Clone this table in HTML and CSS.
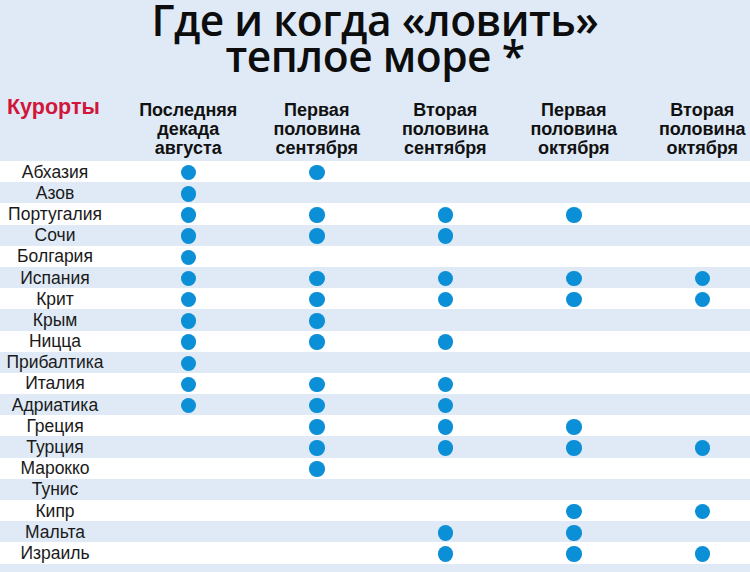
FILE: index.html
```html
<!DOCTYPE html>
<html lang="ru">
<head>
<meta charset="utf-8">
<title>Где и когда «ловить» теплое море</title>
<link rel="stylesheet" href="styles.css">
</head>
<body>
<div class="page">
  <h1 class="title"><span class="tline">Где и когда «ловить»</span><span class="tline">теплое море *</span></h1>
  <div class="table">
    <div class="head">
      <div class="hname">Курорты</div>
      <div class="hcol">Последняя<br>декада<br>августа</div>
      <div class="hcol">Первая<br>половина<br>сентября</div>
      <div class="hcol">Вторая<br>половина<br>сентября</div>
      <div class="hcol">Первая<br>половина<br>октября</div>
      <div class="hcol">Вторая<br>половина<br>октября</div>
    </div>
    <div class="row odd"><span class="name">Абхазия</span><i class="dot"></i><i class="dot"></i><i></i><i></i><i></i></div>
    <div class="row"><span class="name">Азов</span><i class="dot"></i><i></i><i></i><i></i><i></i></div>
    <div class="row odd"><span class="name">Португалия</span><i class="dot"></i><i class="dot"></i><i class="dot"></i><i class="dot"></i><i></i></div>
    <div class="row"><span class="name">Сочи</span><i class="dot"></i><i class="dot"></i><i class="dot"></i><i></i><i></i></div>
    <div class="row odd"><span class="name">Болгария</span><i class="dot"></i><i></i><i></i><i></i><i></i></div>
    <div class="row"><span class="name">Испания</span><i class="dot"></i><i class="dot"></i><i class="dot"></i><i class="dot"></i><i class="dot"></i></div>
    <div class="row odd"><span class="name">Крит</span><i class="dot"></i><i class="dot"></i><i class="dot"></i><i class="dot"></i><i class="dot"></i></div>
    <div class="row"><span class="name">Крым</span><i class="dot"></i><i class="dot"></i><i></i><i></i><i></i></div>
    <div class="row odd"><span class="name">Ницца</span><i class="dot"></i><i class="dot"></i><i class="dot"></i><i></i><i></i></div>
    <div class="row"><span class="name">Прибалтика</span><i class="dot"></i><i></i><i></i><i></i><i></i></div>
    <div class="row odd"><span class="name">Италия</span><i class="dot"></i><i class="dot"></i><i class="dot"></i><i></i><i></i></div>
    <div class="row"><span class="name">Адриатика</span><i class="dot"></i><i class="dot"></i><i class="dot"></i><i></i><i></i></div>
    <div class="row odd"><span class="name">Греция</span><i></i><i class="dot"></i><i class="dot"></i><i class="dot"></i><i></i></div>
    <div class="row"><span class="name">Турция</span><i></i><i class="dot"></i><i class="dot"></i><i class="dot"></i><i class="dot"></i></div>
    <div class="row odd"><span class="name">Марокко</span><i></i><i class="dot"></i><i></i><i></i><i></i></div>
    <div class="row"><span class="name">Тунис</span><i></i><i></i><i></i><i></i><i></i></div>
    <div class="row odd"><span class="name">Кипр</span><i></i><i></i><i></i><i class="dot"></i><i class="dot"></i></div>
    <div class="row"><span class="name">Мальта</span><i></i><i></i><i class="dot"></i><i class="dot"></i><i></i></div>
    <div class="row odd"><span class="name">Израиль</span><i></i><i></i><i class="dot"></i><i class="dot"></i><i class="dot"></i></div>
  </div>
</div>
</body>
</html>
```
FILE: styles.css
```css
html, body {
  margin: 0;
  padding: 0;
  background: #dfeaf6;
}
body {
  width: 750px;
  height: 572px;
  overflow: hidden;
  font-family: "Liberation Sans", Arial, sans-serif;
  color: #111;
}
.page {
  width: 750px;
  overflow: hidden;
}
.title {
  margin: 0;
  box-sizing: border-box;
  height: 90px;
  padding-top: 2px;
  font-family: "Open Sans", "Noto Sans", sans-serif;
  font-weight: 600;
  font-size: 42.5px;
  line-height: 36px;
  text-align: center;
  color: #0d0d0d;
  letter-spacing: -0.5px;
}
.tline {
  display: block;
  height: 36px;
}
.table {
  width: 750px;
  overflow: hidden;
}
.head, .row {
  display: grid;
  grid-template-columns: 124px repeat(5, 128.5px);
  width: 766.5px;
}
.head {
  height: 71px;
  align-items: start;
}
.hname {
  padding: 7px 0 0 7px;
  font-weight: bold;
  font-size: 21.5px;
  line-height: 21px;
  color: #d2163b;
}
.hcol {
  padding-top: 11px;
  font-weight: bold;
  font-size: 18px;
  line-height: 19px;
  text-align: center;
  color: #111;
}
.row {
  height: 21.2px;
  align-items: center;
  justify-items: center;
}
.row.odd {
  background: #fff;
}
.name {
  justify-self: stretch;
  padding-right: 14px;
  text-align: center;
  font-size: 17.5px;
  line-height: 20px;
  color: #1a1a1a;
}
.row i {
  display: block;
  width: 15.5px;
  height: 15.5px;
}
.row i.dot {
  margin-top: 2px;
  border-radius: 50%;
  background: #0b8fd6;
}
```
